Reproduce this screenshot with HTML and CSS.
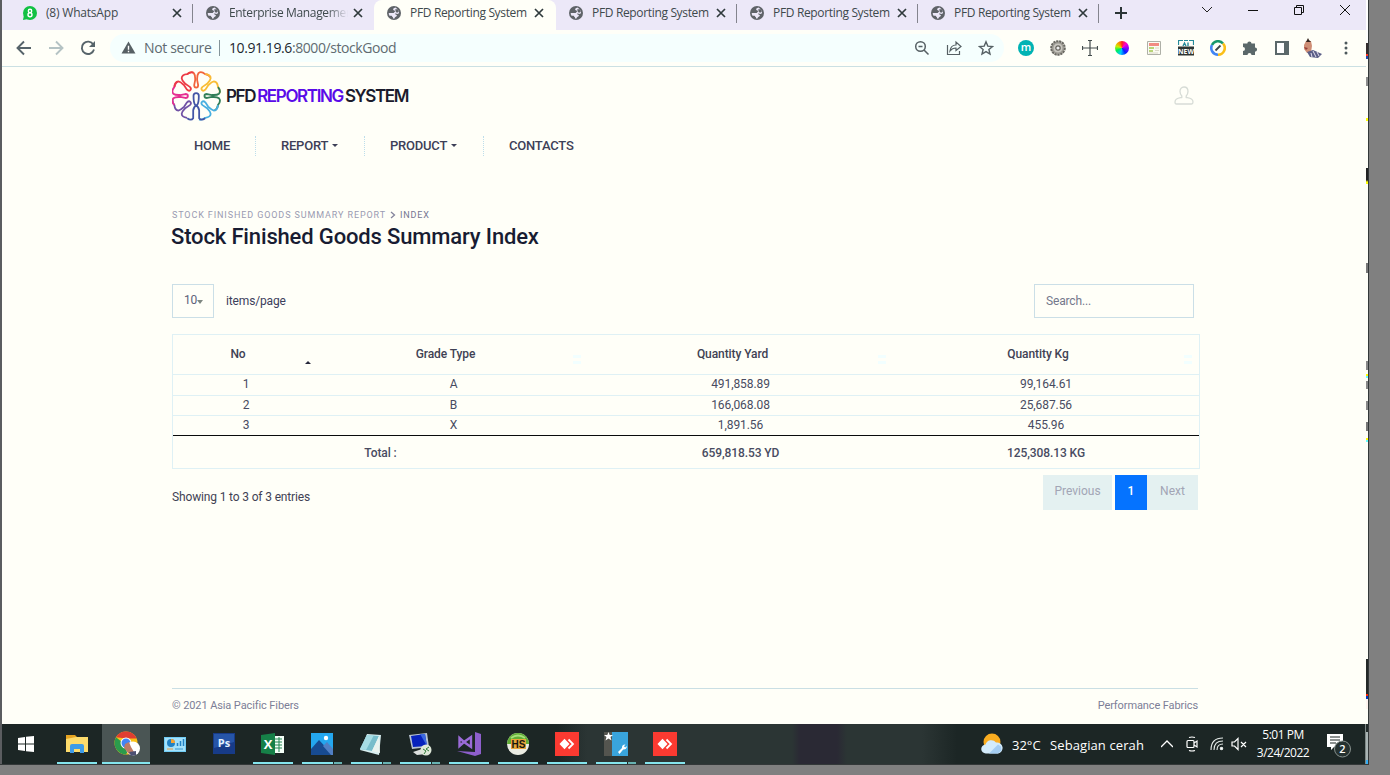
FILE: index.html
```html
<!DOCTYPE html>
<html lang="en">
<head>
<meta charset="utf-8">
<title>PFD Reporting System</title>
<link rel="stylesheet" href="styles.css">
</head>
<body>
<svg class="defs" width="0" height="0">
  <symbol id="globe" viewBox="0 0 14 14"><circle cx="7" cy="7" r="7" fill="#5f6368"/><path d="M8.500 1.500C6.500 1.800 5.800 3 6.300 4c.8.600 1.500.4 1.700 1.200.2 1-1.200 1-1.200 1.800H1.700c0 1 .3 2 .8 2.700h2c.8.300.5 1.300 1.500 1.500v1.300h1.500c.2-1.600 1.500-1.500 2.300-2.400.4-.9-.4-1.500-1.300-1.600L8 7.600c1-.4 1.700 0 2.400.4l1.600-.8c0-2.200-1.200-4.200-3.500-5.700z" fill="#ece8f8"/><path d="M8.200 3.200h2.600l1 2.400-1.600 1.100-1.400-.6z" fill="#5f6368"/></symbol>
  <symbol id="x" viewBox="0 0 10 10"><path d="M1 1l8 8M9 1l-8 8" fill="none" stroke="#2f3a3c" stroke-width="1.700"/></symbol>
  <symbol id="desk" viewBox="0 0 24 24"><rect width="24" height="24" fill="#fb3a31"/><path d="M4.500 12l5-5.200 5 5.200-5 5.200z" fill="#fff"/><path d="M13.500 7.500l4.500 4.500-4.500 4.500" fill="none" stroke="#fff" stroke-width="1.800"/></symbol>
</svg>
<div class="window">
  <div class="screen">
    <div class="tabs">
      <div class="tab first"><svg class="fav" viewBox="0 0 14 14"><circle cx="7" cy="7" r="7" fill="#12c143"/><path d="M0 14l1-5 4 4z" fill="#12c143"/><circle cx="7" cy="4.900" r="1.700" fill="none" stroke="#fff" stroke-width="1.400"/><circle cx="7" cy="8.700" r="2" fill="none" stroke="#fff" stroke-width="1.400"/></svg><span class="label wa">(8) WhatsApp</span><svg class="close"><use href="#x"/></svg></div>
      <div class="tab nosep"><svg class="fav"><use href="#globe"/></svg><span class="label fade">Enterprise Management</span><svg class="close"><use href="#x"/></svg></div>
      <div class="tab active"><svg class="fav"><use href="#globe"/></svg><span class="label">PFD Reporting System</span><svg class="close"><use href="#x"/></svg></div>
      <div class="tab"><svg class="fav"><use href="#globe"/></svg><span class="label">PFD Reporting System</span><svg class="close"><use href="#x"/></svg></div>
      <div class="tab"><svg class="fav"><use href="#globe"/></svg><span class="label">PFD Reporting System</span><svg class="close"><use href="#x"/></svg></div>
      <div class="tab"><svg class="fav"><use href="#globe"/></svg><span class="label">PFD Reporting System</span><svg class="close"><use href="#x"/></svg></div>
      <svg class="plus" width="12" height="12"><path d="M6 0v12M0 6h12" stroke="#2b3436" stroke-width="2"/></svg>
      <div class="controls">
        <svg viewBox="0 0 12 12"><path d="M1 3l5 5 5-5" fill="none" stroke="#222"/></svg>
        <svg viewBox="0 0 12 12"><path d="M1 6.500h10" stroke="#111"/></svg>
        <svg viewBox="0 0 12 12"><path d="M1.500 3.500h7v7h-7zM3.500 3.500v-2h7v7h-2" fill="none" stroke="#111"/></svg>
        <svg viewBox="0 0 12 12"><path d="M1 1l10 10M11 1L1 11" stroke="#111"/></svg>
      </div>
    </div>
    <div class="toolbar">
      <div class="navicons">
        <svg viewBox="0 0 16 16"><path d="M15 8H2M8 1.500L1.500 8 8 14.500" fill="none" stroke="#57646a" stroke-width="1.900"/></svg>
        <svg viewBox="0 0 16 16"><path d="M1 8h13M8 1.500L14.500 8 8 14.500" fill="none" stroke="#b5c3c4" stroke-width="1.900"/></svg>
        <svg viewBox="0 0 16 16"><path d="M13.300 4.500A6.200 6.200 0 1 0 14 9.500" fill="none" stroke="#57646a" stroke-width="1.900"/><path d="M15 1v6H9z" fill="#57646a"/></svg>
      </div>
      <div class="omnibox">
        <svg class="warn" viewBox="0 0 16 14"><path d="M8 .5L15.500 13.500H.5z" fill="#566064"/><path d="M8 5v4.500M8 10.500v1.500" stroke="#fff" stroke-width="1.500"/></svg>
        <span class="insecure">Not secure</span>
        <span class="url"><b>10.91.19.6</b>:8000/stockGood</span>
        <div class="boxicons">
          <svg viewBox="0 0 16 16"><circle cx="6.500" cy="6.500" r="4.800" fill="none" stroke="#566064" stroke-width="1.500"/><path d="M10 10l4.500 4.500M4.500 6.500h4" stroke="#566064" stroke-width="1.500"/></svg>
          <svg viewBox="0 0 16 16"><path d="M1.500 5v9.500h12V11M4 11c.5-4 2.500-6 6-6V2l5 4.500-5 4V8C7.500 8 5.500 9 4 11z" fill="none" stroke="#566064" stroke-width="1.200"/></svg>
          <svg viewBox="0 0 16 16"><path d="M8 1.800l1.800 4.300 4.700.4-3.600 3 1.100 4.500L8 11.600 4 14l1.100-4.500-3.600-3 4.700-.4z" fill="none" stroke="#566064" stroke-width="1.400"/></svg>
        </div>
      </div>
      <div class="exts">
        <div><span class="m">m</span></div>
        <div><svg viewBox="0 0 16 16"><circle cx="8" cy="8" r="6.800" fill="#aaa79f" stroke="#6a6963" stroke-width="2" stroke-dasharray="2.200 .8"/><circle cx="8" cy="8" r="5" fill="#c9c7c0" stroke="#8d8b84" stroke-width=".7"/><circle cx="8" cy="8" r="2.200" fill="#eee" stroke="#66645d" stroke-width="1.200"/></svg></div>
        <div><svg viewBox="0 0 16 16"><path d="M8 .5v15M.5 8h15M6 .5h4M6 15.500h4M.5 6v4M15.500 6v4" stroke="#444c4d" stroke-width="1.200"/></svg></div>
        <div><span class="wheel"></span></div>
        <div><svg viewBox="0 0 16 16"><path d="M1.500 1.500h13v13h-13z" fill="#fbfbf2" stroke="#aeb0a7"/><path d="M3 3h10v3H3z" fill="#f28b82"/><path d="M3 8h5M3 11h4" stroke="#a2c94f" stroke-width="1.300"/><path d="M9 8h4M9 10.500h4M3 13h9" stroke="#dad8c6"/></svg></div>
        <div><svg viewBox="0 0 16 16"><path d="M.5 5V.5H5M11 .5h4.500V5M6 .5h4" fill="none" stroke="#268b9b" stroke-width="1.200"/><path d="M5 6l1.500-3L8 6M10 2.500V6" fill="none" stroke="#268b9b" stroke-width="1.400"/><path d="M0 6.500h16v9H0z" fill="#2e3533"/><text x="8" y="13.500" class="new">NEW</text></svg></div>
        <div><svg viewBox="0 0 16 16"><g fill="none" stroke-width="2.600"><path d="M2 5a6.700 6.700 0 0 1 11-1.500" stroke="#17986b"/><path d="M13 3.500A6.700 6.700 0 0 1 8 14.700" stroke="#fbbf18"/><path d="M8 14.700A6.700 6.700 0 0 1 2 5" stroke="#4285f4"/></g><path d="M5.500 10.500l5-5" stroke="#3c4447" stroke-width="1.800"/></svg></div>
        <div><svg viewBox="0 0 16 16"><path d="M1 3.500h4.300a2.100 2.100 0 1 1 4.200 0H13v4a2.100 2.100 0 1 1 0 4.200V15H9.500a2 2 0 0 0-4 0H1v-4a2 2 0 0 0 0-4z" fill="#5b686a"/></svg></div>
        <div><svg viewBox="0 0 16 16"><path d="M2 2h12v12H2z" fill="#fff" stroke="#5b686a" stroke-width="2"/><path d="M10 1h5v14h-5z" fill="#5b686a"/></svg></div>
        <div><svg class="avatar" viewBox="0 0 20 20"><path d="M1 7l2-4h5l1 5-1 6-4 1-3-4z" fill="#cf8e75"/><path d="M3 4l2-4 1 2 2 2z" fill="#35241f"/><path d="M4 14l6-2 9 4-4 4-8-1z" fill="#5b5f87"/><path d="M10 13l3 6M14 14l2 4M8 15l1 4" stroke="#e5e1ef" stroke-width="1"/><path d="M1 9l4 1-2 2z" fill="#963d37"/></svg></div>
        <div><svg viewBox="0 0 16 16"><g fill="#4d595c"><circle cx="8" cy="3" r="1.500"/><circle cx="8" cy="8" r="1.500"/><circle cx="8" cy="13" r="1.500"/></g></svg></div>
      </div>
    </div>
    <main class="page">
      <header class="brandrow">
        <div class="brand">
          <svg class="logo" viewBox="0 0 148 150" fill="none" stroke-width="5.400" stroke-linejoin="round">
            <defs><path id="petal" d="M46 9Q58-1 66 6Q70 11 70 22V27L67 42Q67 50 73 50T79 42L76 27V22Q76 11 80 6Q88-1 100 9Q111 10 117 19"/></defs>
            <use href="#petal" stroke="#f2643c"/>
            <use href="#petal" stroke="#f9bd35" transform="rotate(45 73 75)"/>
            <use href="#petal" stroke="#317e58" transform="rotate(90 73 75)"/>
            <use href="#petal" stroke="#48afe0" transform="rotate(135 73 75)"/>
            <use href="#petal" stroke="#7152a5" transform="rotate(225 73 75)"/>
            <use href="#petal" stroke="#e52e91" transform="rotate(270 73 75)"/>
            <use href="#petal" stroke="#ed3b45" transform="rotate(315 73 75)"/>
            <path stroke="#4356a6" d="M46 142Q58 151 64 142V118Q66 106 76 102Q81 96 81 74A8 8 0 0 0 65 74Q65 96 70 102Q80 106 82 118V142Q88 151 100 142"/>
          </svg>
          <div class="wordmark">PFD<span class="violet">REPORTING</span>SYSTEM</div>
        </div>
        <svg class="user" viewBox="0 0 20 20" fill="none" stroke="#d7dcd6" stroke-width="1.300"><path d="M10 1c2.700 0 4 2 4 4.500 0 2-1 3.500-1.800 4.500v1.500c2.500.5 6.800.5 6.800 4.500 0 1.500-.5 2-1.500 2h-15C1.500 18 1 17.500 1 16c0-4 4.300-4 6.800-4.500V10C7 9 6 7.500 6 5.500 6 3 7.300 1 10 1z"/></svg>
      </header>
      <nav class="menu">
        <a class="home">HOME</a><a class="report">REPORT<i class="caret"></i></a><a class="product">PRODUCT<i class="caret"></i></a><a class="contacts">CONTACTS</a>
      </nav>
      <div class="crumbs"><span>STOCK FINISHED GOODS SUMMARY REPORT</span><svg width="6" height="8"><path d="M1 1l3.500 3L1 7" fill="none" stroke="#84849c" stroke-width="1.300"/></svg><span class="current">INDEX</span></div>
      <h1>Stock Finished Goods Summary Index</h1>
      <div class="filters"><div class="count">10<i></i></div><span>items/page</span><div class="search">Search...</div></div>
      <table>
        <colgroup><col class="c1"><col class="c2"><col class="c3"><col class="c4"></colgroup>
        <thead><tr><th>No<i class="sort asc"></i></th><th>Grade Type<i class="sort"></i></th><th>Quantity Yard<i class="sort"></i></th><th>Quantity Kg<i class="sort"></i></th></tr></thead>
        <tbody>
          <tr class="r1"><td>1</td><td>A</td><td>491,858.89</td><td>99,164.61</td></tr>
          <tr><td>2</td><td>B</td><td>166,068.08</td><td>25,687.56</td></tr>
          <tr class="last"><td>3</td><td>X</td><td>1,891.56</td><td>455.96</td></tr>
        </tbody>
        <tfoot><tr><td colspan="2">Total :</td><td>659,818.53 YD</td><td>125,308.13 KG</td></tr></tfoot>
      </table>
      <div class="tablefoot"><span class="showing">Showing 1 to 3 of 3 entries</span><div class="pager"><span class="prev">Previous</span><span class="on">1</span><span class="next">Next</span></div></div>
      <footer><span>© 2021 Asia Pacific Fibers</span><span>Performance Fabrics</span></footer>
    </main>
    <div class="taskbar">
      <div class="task start"><svg viewBox="0 0 24 24"><g fill="#fff"><path d="M4 6l7-1v6.500H4zM12 4.800L20 4v7.500h-8zM4 12.500h7V19l-7-1zM12 12.500h8V20l-8-.8z"/></g></svg></div>
      <div class="task run explorer"><svg viewBox="0 0 24 24"><path d="M1 3h9l2 2h11v15H1z" fill="#e6a422"/><path d="M1 7l10-2h12v15H1z" fill="#fddb6c"/><path d="M5 21v-7q0-2 2-2h10q2 0 2 2v7h-4v-4H9v4z" fill="#3e9be8"/></svg></div>
      <div class="task run chrome"><svg class="big" viewBox="0 0 28 28"><circle cx="14" cy="13" r="11.500" fill="#fbc116"/><path d="M4 7.300A11.500 11.500 0 0 1 24.500 8.500H14z" fill="#df3d31"/><path d="M4 7.300A11.500 11.500 0 0 0 14 24.500l4-7-5-3z" fill="#2b9b4c"/><circle cx="14" cy="13" r="5.500" fill="#fff"/><circle cx="14" cy="13" r="4.500" fill="#4285f4"/><circle cx="21" cy="18.500" r="7" fill="#fff"/><path d="M13 14l4-2 2 5 3 5-5 2-5-6z" fill="#bd7b65"/><path d="M17 22l7-1v4l-5 1z" fill="#4c5072"/></svg></div>
      <div class="task"><svg viewBox="0 0 24 24"><path d="M1 5h22v15H1z" fill="#71cdf5"/><path d="M2 6h20v13H2z" fill="#a4e1fb"/><circle cx="8" cy="11" r="4" fill="#2181c4"/><path d="M8 11V7a4 4 0 0 1 4 4z" fill="#f6a332"/><path d="M14.500 14v-3M17.500 14V9M20.500 14V7" stroke="#2181c4" stroke-width="1.500"/><path d="M4 17h6" stroke="#ee9b3b"/><path d="M12 17h8" stroke="#3896ce"/></svg></div>
      <div class="task ps"><svg viewBox="0 0 24 24"><path d="M1 1h22v21H1z" fill="#173b88"/><path d="M2 2h20v8L2 16z" fill="#2655a8"/><text x="12" y="14.500" class="pst">Ps</text></svg></div>
      <div class="task run"><svg viewBox="0 0 24 24"><path d="M12 4h11v17H12z" fill="#f4fff8"/><path d="M14 7h7M14 10h7M14 13h7M14 16h7M18 5v15" stroke="#248653"/><path d="M0 3l14-2v22L0 21z" fill="#168048"/><text x="7" y="17" class="xl">X</text></svg></div>
      <div class="task run multi"><svg viewBox="0 0 24 24"><path d="M1 1h22v22H1z" fill="#24a7ef"/><path d="M1 17l8-9 14 15H1z" fill="#174b91"/><path d="M13 14l4-4 6 7v6h-2z" fill="#517fc4"/><circle cx="16" cy="6" r="2.200" fill="#fff"/></svg></div>
      <div class="task run multi"><svg viewBox="0 0 24 24"><path d="M8 2l14 1-2 20-19-5z" fill="#d8eef0"/><path d="M8 3l12 1-7 15L1 17z" fill="#77bdcb"/><path d="M8 3l7 0-8 15-6-1z" fill="#a6dce4"/><path d="M13 19l7-15 1 17z" fill="#e8f3ef"/></svg></div>
      <div class="task run multi"><svg viewBox="0 0 24 24"><path d="M1 3l18-2 2 14-17 2z" fill="#b9c4d2"/><path d="M3 4l14-2 2 12-14 1z" fill="#0722bd"/><path d="M12 2l5 0 2 12z" fill="#3b69df"/><path d="M5 20l9-3 4 5-9 1z" fill="#dde0de"/><circle cx="18" cy="18" r="5.500" fill="#dfe8d9"/><path d="M15 17l3 2-2 3M21 15l-3 2 3 2" fill="none" stroke="#327b3b"/></svg></div>
      <div class="task run"><svg viewBox="0 0 24 24"><path d="M18 0l6 2v20l-6 2L0 19l18 1z" fill="#8e5fcc"/><path d="M2.500 6v8l4.500-4L14 5v10L7 10z" fill="none" stroke="#9b6bd8" stroke-width="2.400"/></svg></div>
      <div class="task run"><svg viewBox="0 0 24 24"><circle cx="12" cy="12" r="11" fill="#ebece3"/><path d="M1 12a11 11 0 0 1 22 0z" fill="#60ad35"/><path d="M5 6q7-5 14 0" stroke="#a6df7a" stroke-width="2" fill="none"/><path d="M5 7h15v10H5z" fill="#e9a63a"/><text x="12.500" y="16" class="hs">HS</text></svg></div>
      <div class="task run"><svg viewBox="0 0 24 24"><use href="#desk"/></svg></div>
      <div class="task run multi"><svg viewBox="0 0 24 24"><path d="M0 0h8v24H0z" fill="#54554f"/><path d="M8 0h16v24H8z" fill="#39a4dc"/><path d="M4.500 0l1.200 3H9L6.500 5l1 3.500-3-2-3 2 1-3.500L0 3h3.300z" fill="#fff"/><path d="M14 20l4-4a3 3 0 0 1 3.500-3.500l-1.500 1.800 1.200 1.200 1.600-1.500a3 3 0 0 1-3.600 3.400L15.500 22z" fill="#fff"/></svg></div>
      <div class="task run"><svg viewBox="0 0 24 24"><use href="#desk"/></svg></div>
      <div class="tray">
        <svg class="weather" viewBox="0 0 22 22"><circle cx="11" cy="9" r="8.500" fill="#f9ac20"/><path d="M5 20.500a4.500 4.500 0 0 1-.5-9 6 6 0 0 1 10.500-2 5.400 5.400 0 0 1 2 11z" fill="#d3ebfb"/><path d="M8 20.500l9-9 3 2 .5 4-3.500 3z" fill="#a4cdf2"/></svg>
        <span class="temp">32°C</span><span class="cond">Sebagian cerah</span>
        <svg class="up" viewBox="0 0 12 12"><path d="M0 9l6-6 6 6" fill="none" stroke="#fff" stroke-width="1.300"/></svg>
        <svg class="cam" viewBox="0 0 14 16" fill="none" stroke="#fff" stroke-width="1.200"><rect x="2" y="4.500" width="7" height="7" rx="1"/><path d="M9 7l3-2v6L9 9M4 1.500q3-1 6 0M4 14.500q3 1 6 0"/></svg>
        <svg class="wifi" viewBox="0 0 14 14" fill="none" stroke="#e5ebe9" stroke-width="1.100"><path d="M1 13Q1 1 13 1M4 13Q4 4 13 4M7 13Q7 7 13 7"/><circle cx="11.500" cy="11.500" r="1.200" fill="#fff"/></svg>
        <svg class="vol" viewBox="0 0 16 14" fill="none" stroke="#fff" stroke-width="1.200"><path d="M1 5h2.500L7 1.500v11L3.500 9H1zM10 5l5 5M15 5l-5 5"/></svg>
        <div class="clock"><span class="time">5:01 PM</span><span class="date">3/24/2022</span></div>
        <svg class="notice" viewBox="0 0 26 26"><path d="M1 2h16v13h-9l-3 3v-3H1z" fill="#fff"/><path d="M4 5h10M4 8h10M4 11h6" stroke="#1c2625" stroke-width="1.200"/><circle cx="16.500" cy="17" r="8" fill="#253130" stroke="#87918e"/><text x="16.500" y="21" class="badge">2</text></svg>
      </div>
    </div>
  </div>
  <div class="sliver"></div>
</div>
</body>
</html>
```
FILE: styles.css
```css
* { box-sizing: border-box; }
body { margin: 0; height: 775px; background: #808080; overflow: hidden; font-family: Roboto, sans-serif; font-size: 12px; color: #3c405c; }
svg { display: block; flex: none; }
.defs { position: absolute; }
.window { display: flex; width: 1369px; height: 765px; border: solid #333839; border-width: 0 1px 1px 0; background: #fffff8; }
.screen { width: 1366px; border-left: 2px solid #5b5d60; display: flex; flex-direction: column; }
.sliver { width: 2px; background: linear-gradient(#fff 43px, #332d2e 43px 54px, #f32 54px 56px, #24a 56px 59px, #fffff8 59px 77px, #8c8c8c 77px 86px, #fffff8 86px 118px, #ff0 118px 121px, #fffff8 121px 168px, #222 168px 180px, #ff0 182px 184px, #fffff8 184px 263px, #777 263px 273px, #fffff8 273px 361px, #888 361px 370px, #fffff8 370px 374px, #ff0 374px 376px, #6ff 376px 378px, #fffff8 378px 381px, #888 381px 389px, #fffff8 389px 401px, #888 401px 410px, #fffff8 410px 422px, #777 422px 431px, #fffff8 431px 438px, #ff0 438px 440px, #6ff 440px 442px, #fffff8 442px 659px, #242827 659px 694px, #f20 694px 696px, #03b 696px 699px, #fff4ef 699px 709px, #fffff8 709px 724px, #222b2a 724px 732px, #a9b4b4 732px 760px, #36aef5 760px); }

.tabs { display: flex; height: 30px; padding-left: 9px; background: #ece8f8; font: 12px "Open Sans", sans-serif; color: #3e494c; }
.tab { display: flex; align-items: center; width: 181px; height: 30px; padding: 0 11px 4px 13px; background: linear-gradient(#84848e, #84848e) no-repeat right 4px / 1px 19px; }
.tab.first { width: 182px; padding-left: 12px; }
.nosep { background: none; }
.active { width: 182px; padding-right: 12px; background: none; background-color: #fffff8; border-radius: 8px 8px 0 0; }
.fav { width: 14px; height: 14px; margin-right: 9px; }
.label { flex: 1; height: 18px; overflow: hidden; white-space: nowrap; line-height: 17px; letter-spacing: -0.34px; }
.wa { letter-spacing: -0.2px; }
.fade { margin-right: 5px; -webkit-mask-image: linear-gradient(90deg, #000 82%, transparent); mask-image: linear-gradient(90deg, #000 82%, transparent); }
.close { width: 10px; height: 10px; }
.plus { margin: 7px 0 0 16px; }
.controls { display: flex; margin: 4px -2px 0 auto; }
.controls svg { width: 12px; height: 12px; margin: 0 17px; }

.toolbar { display: flex; height: 37px; padding-bottom: 1px; align-items: center; border-bottom: 1px solid #cbe0e3; background: #fffff8; }
.navicons { display: flex; gap: 16px; width: 108px; padding-left: 14px; }
.navicons svg { width: 16px; height: 16px; }
.omnibox { display: flex; align-items: center; width: 894px; height: 28px; padding-left: 11px; border-radius: 14px; background: #f5fffe; font: 14px "Open Sans", sans-serif; color: #616b71; }
.warn { width: 15px; height: 13px; margin-right: 8px; }
.insecure { width: 76px; height: 16px; line-height: 15px; border-right: 1px solid #84949a; white-space: nowrap; letter-spacing: -0.35px; }
.url { margin-left: 9px; line-height: 16px; letter-spacing: -0.42px; }
.url b { font-weight: 400; color: #1c272e; }
.boxicons { display: flex; gap: 16px; margin: 0 10px 0 auto; }
.boxicons svg { width: 16px; height: 16px; }
.exts { display: flex; margin-left: 6px; }
.exts > div { display: flex; justify-content: center; width: 32px; height: 17px; align-items: center; }
.exts svg { width: 16px; height: 16px; }
.exts svg.avatar { width: 20px; height: 20px; margin-right: 3px; }
.m { width: 16px; height: 16px; border-radius: 50%; background: #00b3b4; color: #fff; font: 600 11px/14px "Open Sans", sans-serif; text-align: center; }
.wheel { width: 14px; height: 14px; border-radius: 50%; background: conic-gradient(#f22, #f0c 12%, #80f 25%, #02f 40%, #0cf 54%, #0e5 68%, #ce0 80%, #f80 92%, #f22); }
.new { font: 700 6.800px "Open Sans", sans-serif; fill: #fff; text-anchor: middle; }

.page { display: flex; flex-direction: column; width: 1028px; height: 657px; margin-left: 170px; }
.brandrow { display: flex; justify-content: space-between; align-items: center; height: 51px; margin-top: 3px; padding-right: 6px; }
.brand { display: flex; align-items: center; gap: 5px; }
.logo { width: 49px; height: 50px; }
.wordmark { font: 600 17px/20px Inter, sans-serif; letter-spacing: -1.37px; color: #1b1b2c; }
.violet { margin: 0 2px 0 2px; color: #5a0be8; }
.user { width: 20px; height: 20px; }
.menu { display: flex; height: 20px; margin-top: 15px; font: 500 13px/20px Roboto, sans-serif; letter-spacing: -0.22px; color: #3d4057; }
.menu a { padding-left: 25px; border-right: 1px dotted #bddeeb; }
.menu .home { width: 84px; padding-left: 22px; }
.menu .report { width: 109px; }
.menu .product { width: 119px; }
.menu .contacts { border: 0; }
.caret { display: inline-block; margin-left: 4px; vertical-align: 3px; border: solid transparent; border-width: 3px 3px 0; border-top-color: #3d4057; }
.crumbs { display: flex; align-items: center; height: 12px; margin-top: 53px; font-size: 9px; line-height: 12px; letter-spacing: 0.89px; color: #9a9bb2; }
.crumbs svg { margin: 0 4px; }
.crumbs .current { color: #747691; }
h1 { height: 30px; margin: 1px 0 0 -1px; font: 500 22px/30px Roboto, sans-serif; letter-spacing: -0.15px; color: #181c32; white-space: nowrap; }
.filters { display: flex; align-items: center; height: 34px; margin-top: 32px; padding-right: 6px; line-height: 32px; letter-spacing: -0.15px; }
.count { display: flex; align-items: center; width: 42px; height: 34px; margin-right: 12px; padding: 0 0 2px 11px; border: 1px solid #cbdfe7; color: #5e6278; }
.count i { border: solid transparent; border-width: 4px 3px 0; border-top-color: #7e8781; margin-top: 3px; }
.search { width: 160px; height: 34px; margin-left: auto; padding-left: 11px; border: 1px solid #cbdfe7; color: #74788c; }
table { flex: none; width: 1028px; margin-top: 16px; border: 1px solid #dff1f5; border-spacing: 0; table-layout: fixed; text-align: center; line-height: 16px; color: #484b61; letter-spacing: -0.08px; }
.c1 { width: 146px; } .c2 { width: 269px; } .c3 { width: 305px; } .c4 { width: 306px; }
th, td { padding: 0; border-bottom: 1px solid #dff1f5; }
th { position: relative; height: 40px; padding: 0 16px 1px 0; font-weight: 500; color: #3f4254; }
.sort { position: absolute; right: 7px; top: 20px; width: 8px; height: 9px; background: linear-gradient(#f2ffff 3px, transparent 3px 6px, #f2ffff 6px); }
.sort.asc { right: 8px; top: 26px; width: 0; height: 0; border: solid transparent; border-width: 0 3px 3px; border-bottom-color: #26283b; background: none; }
tbody td { height: 20px; padding-bottom: 1px; }
.r1 td { height: 21px; padding-bottom: 2px; }
.last td { border-bottom-color: #090b0c; }
tfoot td { height: 32px; padding-top: 2px; border: 0; font-weight: 500; color: #484b61; }
.tablefoot { display: flex; justify-content: space-between; height: 35px; margin-top: 6px; padding-right: 2px; }
.showing { margin-top: 14px; line-height: 16px; letter-spacing: -0.15px; color: #3f4254; }
.pager { display: flex; line-height: 32px; text-align: center; color: #a2a5b5; }
.prev { width: 69px; background: #e4f1f1; margin-right: 3px; }
.on { width: 32px; background: #0573ff; color: #fff; font-weight: 500; }
.next { width: 51px; background: #e4f1f1; }
footer { display: flex; justify-content: space-between; width: 1026px; height: 36px; margin-top: auto; padding-top: 9px; border-top: 1px solid #cadfe4; font-size: 11px; line-height: 16px; letter-spacing: -0.1px; color: #7c7e97; }

.taskbar { display: flex; height: 40px; background: linear-gradient(90deg, #1c2625 555px, #2b3534 585px 790px, #2a2934 798px 835px, #2b3534 845px 920px, #1c2625 955px); }
.task { display: flex; justify-content: center; align-items: center; width: 49px; height: 40px; }
.start { padding-right: 1px; }
.task svg { width: 24px; height: 24px; }
.task svg.big { width: 28px; height: 28px; }
.run { background: linear-gradient(#84e5ee, #84e5ee) no-repeat 55% 100% / 40px 2px; }
.multi { background: linear-gradient(90deg, #84e5ee 31px, #1c2625 31px 32px, #67b2b2 32px) no-repeat 55% 100% / 40px 2px; }
.explorer { padding-left: 2px; background-position: 6px 100%; }
.chrome { margin: 0 0 0 2px; width: 48px; background: linear-gradient(#84e5ee, #84e5ee) no-repeat 0 100% / 48px 2px, #4a5554; }
.pst { font: 700 11px "Open Sans", sans-serif; fill: #e4f2ff; text-anchor: middle; }
.xl { font: 700 13px "Open Sans", sans-serif; fill: #fff; text-anchor: middle; }
.hs { font: 700 10px "Liberation Sans", sans-serif; fill: #171710; text-anchor: middle; }
.tray { display: flex; align-items: center; margin-left: auto; padding-right: 13px; border-right: 1px solid #7f8987; font: 13px "Open Sans", sans-serif; color: #fff; white-space: nowrap; }
.weather { width: 22px; height: 22px; }
.temp { margin-left: 9px; width: 38px; }
.cond { width: 95px; letter-spacing: 0.1px; }
.temp, .cond { padding-top: 2px; }
.up { width: 12px; height: 12px; margin-left: 16px; }
.cam { width: 14px; height: 16px; margin-left: 12px; }
.wifi { width: 14px; height: 14px; margin-left: 11px; }
.vol { width: 16px; height: 14px; margin-left: 7px; }
.clock { display: flex; flex-direction: column; align-items: center; width: 54px; margin-left: 9px; font-size: 12px; line-height: 18px; letter-spacing: -0.5px; }
.notice { width: 26px; height: 26px; margin: 2px 0 0 16px; }
.badge { font: 600 11px "Open Sans", sans-serif; fill: #fff; text-anchor: middle; }
```
